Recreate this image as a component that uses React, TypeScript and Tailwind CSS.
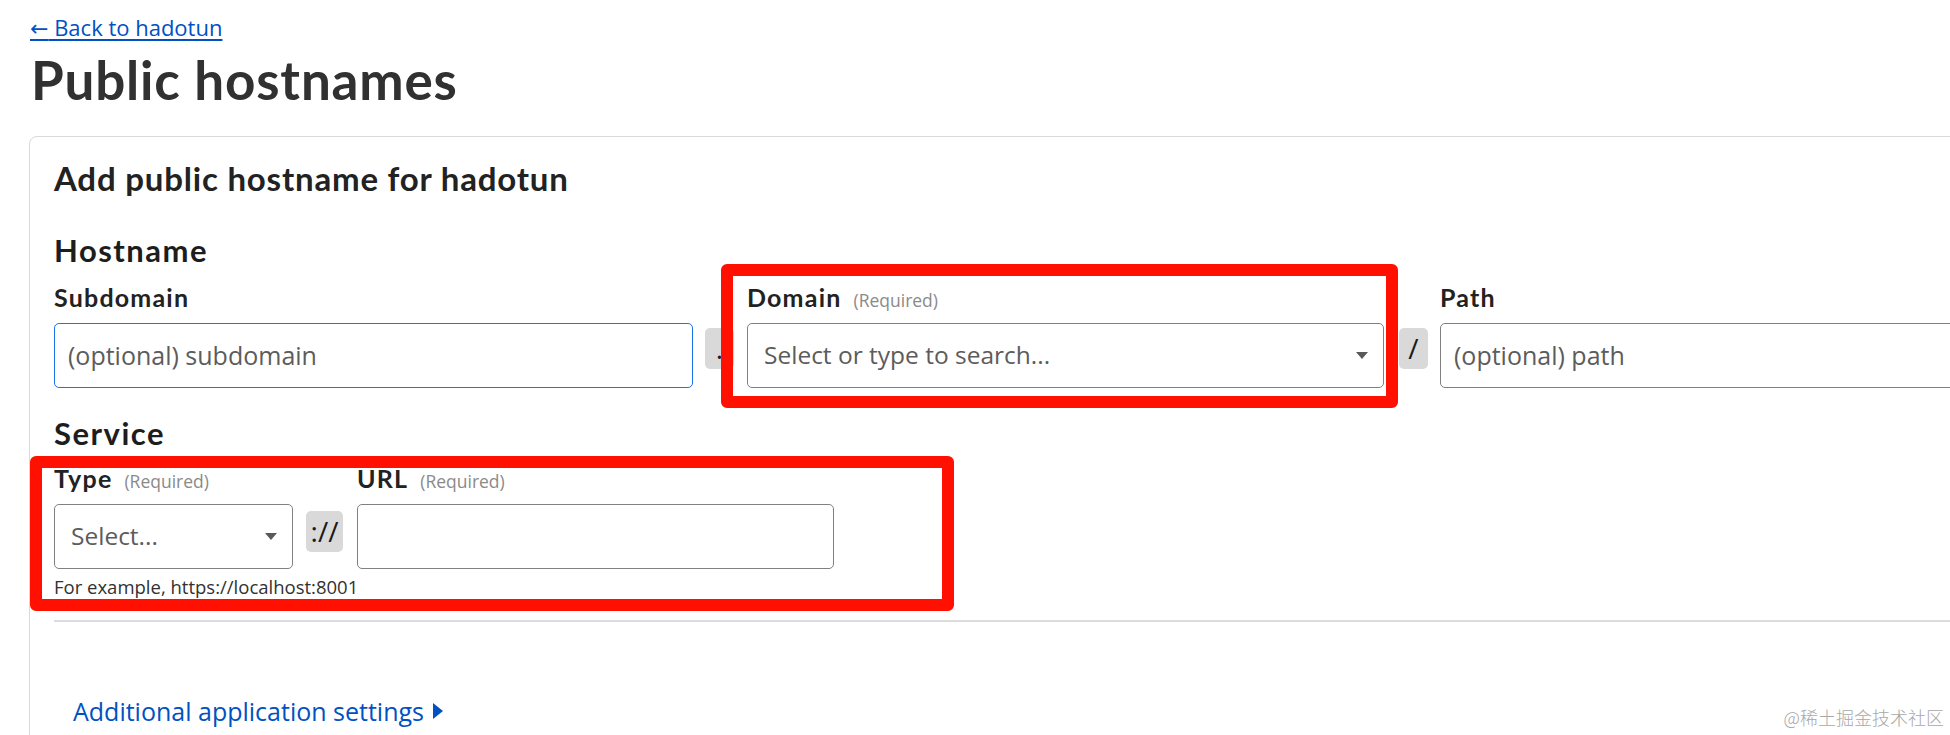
import React from 'react';

// Small filled caret used by the select boxes
const Caret = () => (
  <svg width="12" height="7" viewBox="0 0 12 7" className="shrink-0">
    <path d="M0 0h12L6 7z" fill="#595959" />
  </svg>
);

const FieldLabel = ({ text, required }: { text: string; required?: boolean }) => (
  <div className="flex h-[29px] items-baseline whitespace-nowrap">
    <span className="font-['Lato',sans-serif] text-[25px] font-bold leading-[29px] tracking-[1.2px] text-[#222]">{text}</span>
    {required && <span className="ml-[12px] text-[17.5px] text-[#8a8a8a]">(Required)</span>}
  </div>
);

const Separator = ({ children, className = '' }: { children: React.ReactNode; className?: string }) => (
  <div
    className={`flex h-[41px] shrink-0 items-center justify-center rounded-[5px] bg-[#d9d9d9] text-[28px] leading-none text-[#1a1a1a] ${className}`}
  >
    {children}
  </div>
);

const SelectBox = ({ placeholder }: { placeholder: string }) => (
  <div className="mt-[11px] flex h-[65px] items-center justify-between rounded-[5px] border border-[#808080] pl-[16px] pr-[15px] text-[24.5px] text-[#5c5c5c]">
    <span>{placeholder}</span>
    <Caret />
  </div>
);

export default function App() {
  return (
    <div className="relative h-[735px] w-[1950px] overflow-hidden bg-white font-['Open_Sans',sans-serif] text-[#313131]">
      <div className="h-[42px] pl-[30px] pt-[12px]">
        <a href="#" className="block w-max text-[22px] leading-[30px] text-[#0051c3] underline decoration-[2px] underline-offset-[3px]">
          <span className="font-['DejaVu_Sans',sans-serif]">←</span> Back to hadotun
        </a>
      </div>
      <h1 className="mt-[7px] h-[62px] pl-[31px] font-['Lato',sans-serif] text-[53px] font-bold leading-[62px] tracking-[0.8px] text-[#313131]">
        Public hostnames
      </h1>

      <div className="ml-[29px] mt-[25px] h-[700px] w-[2000px] rounded-tl-[8px] border border-[#d9d9d9] pl-[24px] pt-[22px]">
        <h2 className="font-['Lato',sans-serif] text-[33px] font-bold leading-[1.2] tracking-[0.8px] text-[#222]">
          Add public hostname for hadotun
        </h2>

        <h3 className="mt-[33px] font-['Lato',sans-serif] text-[31px] font-bold leading-[1.2] tracking-[1.5px] text-[#1d1d1d]">Hostname</h3>
        <div className="mt-[14px] flex items-start">
          <div className="w-[639px] shrink-0">
            <FieldLabel text="Subdomain" />
            <input
              placeholder="(optional) subdomain"
              className="mt-[11px] h-[65px] w-full rounded-[5px] border border-[#1a73e8] px-[13px] text-[25px] text-[#222] outline-none placeholder:text-[#5c5c5c]"
            />
          </div>
          <Separator className="ml-[12px] mr-[13px] mt-[45px] w-[29px]">.</Separator>
          <div className="w-[637px] shrink-0">
            <FieldLabel text="Domain" required />
            <SelectBox placeholder="Select or type to search..." />
          </div>
          <Separator className="ml-[15px] mr-[12px] mt-[45px] w-[29px]">/</Separator>
          <div className="w-[639px] shrink-0">
            <FieldLabel text="Path" />
            <input
              placeholder="(optional) path"
              className="mt-[11px] h-[65px] w-full rounded-[5px] border border-[#808080] px-[13px] text-[25px] text-[#222] outline-none placeholder:text-[#5c5c5c]"
            />
          </div>
        </div>

        <h3 className="mt-[27px] font-['Lato',sans-serif] text-[31px] font-bold leading-[1.2] tracking-[1.5px] text-[#1d1d1d]">Service</h3>
        <div className="mt-[12px] flex items-start">
          <div className="w-[239px] shrink-0">
            <FieldLabel text="Type" required />
            <SelectBox placeholder="Select..." />
            <p className="mt-[6px] whitespace-nowrap text-[18.5px] leading-[24px] text-[#313131]">
              For example, https://localhost:8001
            </p>
          </div>
          <Separator className="ml-[13px] mr-[14px] mt-[47px] w-[37px]">://</Separator>
          <div className="w-[477px] shrink-0">
            <FieldLabel text="URL" required />
            <input className="mt-[11px] h-[65px] w-full rounded-[5px] border border-[#808080] px-[13px] text-[24px] outline-none" />
          </div>
        </div>

        <div className="mt-[21px] h-[2px] w-full bg-[#dcdcdc]" />

        <button className="ml-[19px] mt-[73px] flex items-center gap-[9px] text-[25px] leading-[33px] text-[#0051c3]">
          Additional application settings
          <svg width="10" height="16" viewBox="0 0 10 16">
            <path d="M0 0l10 8-10 8z" fill="#0051c3" />
          </svg>
        </button>
      </div>

      {/* annotation boxes drawn over the form */}
      <div className="pointer-events-none absolute left-[721px] top-[264px] h-[144px] w-[677px] rounded-[6px] border-[12px] border-[#ff1000]" />
      <div className="pointer-events-none absolute left-[30px] top-[456px] h-[155px] w-[924px] rounded-[6px] border-[12px] border-[#ff1000]" />

      <div className="pointer-events-none absolute bottom-[4px] right-[6px] font-['Noto_Sans_CJK_SC',sans-serif] text-[18px] font-light text-[#a8a8a8]">
        @稀土掘金技术社区
      </div>
    </div>
  );
}
